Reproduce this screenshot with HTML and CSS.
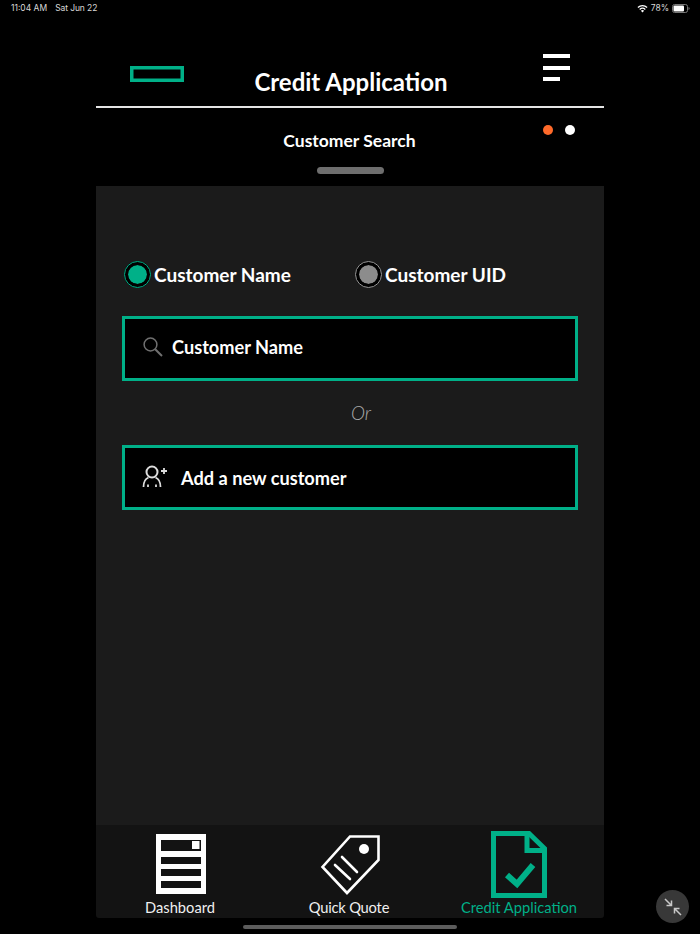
FILE: index.html
```html
<!DOCTYPE html>
<html lang="en">
<head>
<meta charset="utf-8">
<title>Credit Application</title>
<link rel="stylesheet" href="styles.css">
</head>
<body>
<div class="status">
  <div class="status-left"><span>11:04 AM</span><span>Sat Jun 22</span></div>
  <div class="status-right">
    <svg class="wifi" width="11" height="9" viewBox="0 0 11 9"><path d="M5.500 8.600 3.900 6.800a2.400 2.400 0 0 1 3.200 0z" fill="#fff"/><path d="M2.700 5.400a4.200 4.200 0 0 1 5.600 0M.9 3.400a6.800 6.800 0 0 1 9.200 0" fill="none" stroke="#fff" stroke-width="1.300"/></svg>
    <span>78%</span>
    <svg width="18" height="9" viewBox="0 0 18 9"><rect x=".5" y=".5" width="15" height="8" rx="2" fill="none" stroke="#777"/><rect x="1.500" y="1.500" width="10.500" height="6" rx="1" fill="#fff"/><path d="M16.500 3v3a1.600 1.600 0 0 0 0-3z" fill="#777"/></svg>
  </div>
</div>
<main class="app">
  <header class="topbar">
    <svg class="logo" width="54" height="16" viewBox="0 0 54 16" fill="none" stroke="#00b088" stroke-width="3.500"><rect x="1.750" y="1.750" width="50.500" height="12.500"/></svg>
    <h1 class="title">Credit Application</h1>
    <div class="menu"><i class="bar"></i><i class="bar"></i><i class="bar short"></i></div>
  </header>
  <section class="subhead">
    <div class="dots"><i class="dot orange"></i><i class="dot white"></i></div>
    <h2 class="subtitle">Customer Search</h2>
    <div class="handle"></div>
  </section>
  <section class="panel">
    <div class="radios">
      <label class="radio"><i class="ring on"></i><span>Customer Name</span></label>
      <label class="radio"><i class="ring"></i><span>Customer UID</span></label>
    </div>
    <div class="field search">
      <svg class="lift" width="20" height="20" viewBox="0 0 20 20" fill="none" stroke="#707070" stroke-width="1.500"><circle cx="7.500" cy="7.500" r="6.400"/><path d="M12.200 12.200 19 19" stroke-width="2"/></svg>
      <span class="lift">Customer Name</span>
    </div>
    <div class="or">Or</div>
    <div class="field add">
      <svg width="26" height="26" viewBox="0 0 26 26" fill="none" stroke="#dcdcdc" stroke-width="2"><circle cx="10" cy="7" r="5.500"/><path d="M1.500 22c0-5.500 2.500-8.500 5-9.500M18.500 22c0-5.500-2.500-8.500-5-9.500M6 22v-2.500M14 22v-2.500M19 6h6M22 3v6" stroke-width="1.800"/></svg>
      <span>Add a new customer</span>
    </div>
  </section>
  <nav class="tabs">
    <div class="tab">
      <svg class="icon dash" width="50" height="60" viewBox="0 0 50 60"><path fill="#fff" fill-rule="evenodd" d="M0 0h50v60H0zM5 6v11h40V6zM5 23v7h40v-7zM5 35v7h40v-7zM5 47v7h40v-7z"/><rect x="36" y="7" width="7.500" height="8" fill="#fff"/></svg>
      <span>Dashboard</span>
    </div>
    <div class="tab quote">
      <svg class="icon tag" width="60" height="60" viewBox="0 0 60 60" fill="none" stroke="#fff"><path d="M30 1.500h28.500V25L27 58 2.500 32z" stroke-width="2.600"/><circle cx="44" cy="14" r="5" fill="#fff" stroke="none"/><path d="M15 30 30 44M22 22 37 37" stroke-width="2.600" stroke-linecap="round"/></svg>
      <span>Quick Quote</span>
    </div>
    <div class="tab active">
      <svg class="icon doc" width="56" height="67" viewBox="0 0 56 67" fill="none" stroke="#00b088" stroke-width="5"><path d="M2.500 2.500H38L53.500 17.500v47H2.500z"/><path d="M36 2.500v17h17.500"/><path d="M16 44l10 9 16-19" stroke-width="6"/></svg>
      <span>Credit Application</span>
    </div>
  </nav>
</main>
<div class="home"></div>
<button class="float" type="button" aria-label="Collapse">
  <svg width="18" height="18" viewBox="0 0 18 18" fill="none" stroke="#c8c8c8" stroke-width="1.500"><path d="M1 1l6 6M2.500 7.500H7.500V2.500M17 17l-6-6M15.500 10.500H10.500V15.500"/></svg>
</button>
</body>
</html>
```
FILE: styles.css
```css
* { box-sizing: border-box; }
html, body { margin: 0; height: 934px; overflow: hidden; }
body {
  position: relative;
  background: #000;
  color: #fff;
  font-family: "Lato", "Noto Sans", sans-serif;
}
h1, h2 { margin: 0; }
i { display: block; }

.status {
  height: 16px;
  padding: 0 10px 0 11px;
  display: flex;
  justify-content: space-between;
  align-items: center;
  font-size: 8.5px;
  color: #d8d8d8;
  font-family: "Inter", sans-serif;
}
.status-left { display: flex; gap: 8px; }
.status-left span + span { letter-spacing: -.1px; }
.status-right { display: flex; align-items: center; gap: 3px; }

.app { width: 508px; margin: 0 auto; display: flex; flex-direction: column; height: 902px; }

.topbar {
  height: 92px;
  border-bottom: 2px solid #e4e4e4;
  position: relative;
  display: flex;
  justify-content: center;
  padding: 49px 0 0 2px;
}
.logo {
  position: absolute;
  left: 34px;
  top: 50px;
}
.title { font-size: 24px; font-weight: 700; line-height: 33px; }
.menu {
  position: absolute;
  left: 447px;
  top: 38px;
  display: flex;
  flex-direction: column;
  gap: 7.5px;
}
.bar { width: 27px; height: 4px; background: #fff; }
.bar.short { width: 17px; }

.subhead { height: 78px; position: relative; display: flex; flex-direction: column; align-items: center; padding-top: 21px; }
.subtitle { font-size: 17.5px; font-weight: 700; line-height: 24px; margin-left: -1px; }
.handle { width: 67px; height: 7px; border-radius: 4px; background: #6e6e6e; margin-top: 14px; }
.dots { position: absolute; left: 447px; top: 17px; display: flex; gap: 12px; }
.dot { width: 10px; height: 10px; border-radius: 50%; }
.dot.orange { background: #ff6a2a; }
.dot.white { background: #fff; }

.panel { height: 639px; background: #1b1b1b; padding: 74px 26px 0; }
.radios { display: flex; height: 28px; margin-left: 2px; }
.radio { flex: none; display: flex; align-items: center; gap: 3px; font-size: 19px; font-weight: 700; width: 231px; }
.ring {
  width: 27px;
  height: 27px;
  border-radius: 50%;
  background: #8c8c8c;
  background-clip: padding-box;
  border: 4px solid #000;
  outline: 1px solid #9a9a9a;
  outline-offset: -1px;
}
.ring.on { background-color: #00b088; outline-color: #00b088; }

.field {
  width: 456px;
  height: 65px;
  background: #000;
  border: 3px solid #00b088;
  display: flex;
  align-items: center;
  font-size: 18.2px;
  font-weight: 700;
}
.search { margin-top: 28px; padding-left: 18px; gap: 9px; }
.lift { margin-bottom: 3px; }
.add { padding-left: 17px; gap: 13px; }
.or { height: 64px; padding-left: 229px; line-height: 64px; font-size: 19px; font-style: italic; font-weight: 300; color: #aaa; }

.tabs {
  height: 93px;
  background: #131313;
  border-radius: 0 0 3px 3px;
  display: grid;
  grid-template-columns: 168px 170px 170px;
}
.tab {
  display: flex;
  flex-direction: column;
  align-items: center;
  justify-content: flex-end;
  padding-bottom: 1px;
  font-size: 14.7px;
  line-height: 20px;
  color: #f0f0f0;
}
.quote { letter-spacing: -.2px; }
.dash { margin: 0 0 3px 1px; }
.tag { margin: 0 0 2px 1px; }
.doc { margin-bottom: -1px; }
.tab.active { color: #00b088; }

.home {
  position: absolute;
  left: 243px;
  top: 925px;
  width: 214px;
  height: 4px;
  border-radius: 2px;
  background: #5c5c5c;
}
.float {
  position: absolute;
  left: 656px;
  top: 890px;
  width: 33px;
  height: 33px;
  border: 0;
  padding: 0;
  border-radius: 50%;
  background: #383838;
  display: flex;
  align-items: center;
  justify-content: center;
}
```
